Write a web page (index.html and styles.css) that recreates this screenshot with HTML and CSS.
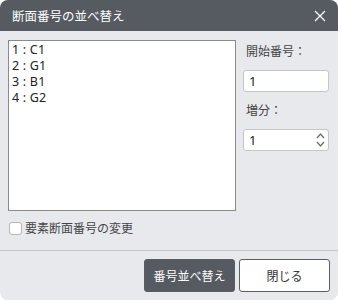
FILE: index.html
```html
<!DOCTYPE html>
<html lang="ja">
<head>
    <meta charset="UTF-8">
    <meta name="viewport" content="width=device-width, initial-scale=1.0">
    <title>断面番号の並べ替え</title>
    <link rel="stylesheet" href="styles.css">
</head>
<body>

<div class="dialog">
    <div class="title-bar">
        <span class="title">断面番号の並べ替え</span>
        <svg class="close" width="12" height="12" viewBox="0 0 12 12">
            <path d="M1 1 L11 11 M11 1 L1 11" stroke="#ffffff" stroke-width="1.4" fill="none"/>
        </svg>
    </div>

    <div class="content">
        <div class="list">
            <div class="item">1 : C1</div>
            <div class="item">2 : G1</div>
            <div class="item">3 : B1</div>
            <div class="item">4 : G2</div>
        </div>

        <div class="side">
            <label class="field-label">開始番号：</label>
            <div class="input">1</div>

            <label class="field-label">増分：</label>
            <div class="input spin">
                <span>1</span>
                <svg class="spin-arrows" width="9" height="16" viewBox="0 0 9 16">
                    <path d="M1 6 L4.5 2 L8 6 M1 10 L4.5 14 L8 10" stroke="#6a6e74" stroke-width="1.3" fill="none"/>
                </svg>
            </div>
        </div>
    </div>

    <div class="check-row">
        <span class="checkbox"></span>
        <span>要素断面番号の変更</span>
    </div>

    <div class="footer">
        <button class="btn primary">番号並べ替え</button>
        <button class="btn">閉じる</button>
    </div>
</div>

</body>
</html>
```

FILE: styles.css
```css
body {
    margin: 0;
    background-color: #ffffff;
    font-family: "Noto Sans", "Noto Sans CJK JP", sans-serif;
}
.dialog {
    width: 338px;
    height: 300px;
    background-color: #e8e9ed;
    border-radius: 8px;
    overflow: hidden;
    color: #333333;
}
.title-bar {
    height: 31px;
    background-color: #565b62;
    display: flex;
    align-items: center;
    justify-content: space-between;
    padding: 0 12px;
}
.title {
    color: #ffffff;
    font-size: 12.5px;
}
.close {
    display: block;
}
.content {
    display: flex;
    padding: 9px 8px 0 8px;
}
.list {
    width: 226px;
    height: 168px;
    background-color: #ffffff;
    border: 1px solid #8a8a8f;
    padding-top: 1px;
}
.item {
    padding-left: 3px;
    font-size: 12.5px;
    letter-spacing: 0.2px;
    line-height: 16px;
    color: #222222;
}
.side {
    margin-left: 7px;
    width: 86px;
}
.field-label {
    display: block;
    font-size: 12px;
    line-height: 18px;
    margin: 3px 0 9px 3px;
    color: #444444;
}
.input {
    height: 20px;
    background-color: #ffffff;
    border: 1px solid #c4c5c9;
    border-radius: 3px;
    font-size: 13px;
    line-height: 20px;
    padding-left: 5px;
    color: #222222;
    margin-bottom: 10px;
}
.spin {
    display: flex;
    align-items: center;
    justify-content: space-between;
    padding-right: 3px;
}
.spin-arrows {
    display: block;
}
.check-row {
    display: flex;
    align-items: center;
    padding: 10px 0 0 9px;
    font-size: 12px;
    color: #444444;
    height: 14px;
}
.checkbox {
    width: 11px;
    height: 11px;
    border: 1px solid #b4b6ba;
    border-radius: 3px;
    background-color: #ffffff;
    margin-right: 3px;
}
.footer {
    margin-top: 15px;
    border-top: 1px solid #c6c7cb;
    display: flex;
    justify-content: flex-end;
    gap: 4px;
    padding: 8px 8px 0 0;
}
.btn {
    width: 91px;
    height: 33px;
    padding: 0;
    white-space: nowrap;
    font-family: "Noto Sans", "Noto Sans CJK JP", sans-serif;
    font-size: 12px;
    background-color: #ffffff;
    color: #333333;
    border: 1px solid #5a5e64;
    border-radius: 3px;
}
.btn.primary {
    background-color: #565b62;
    color: #ffffff;
}
```
